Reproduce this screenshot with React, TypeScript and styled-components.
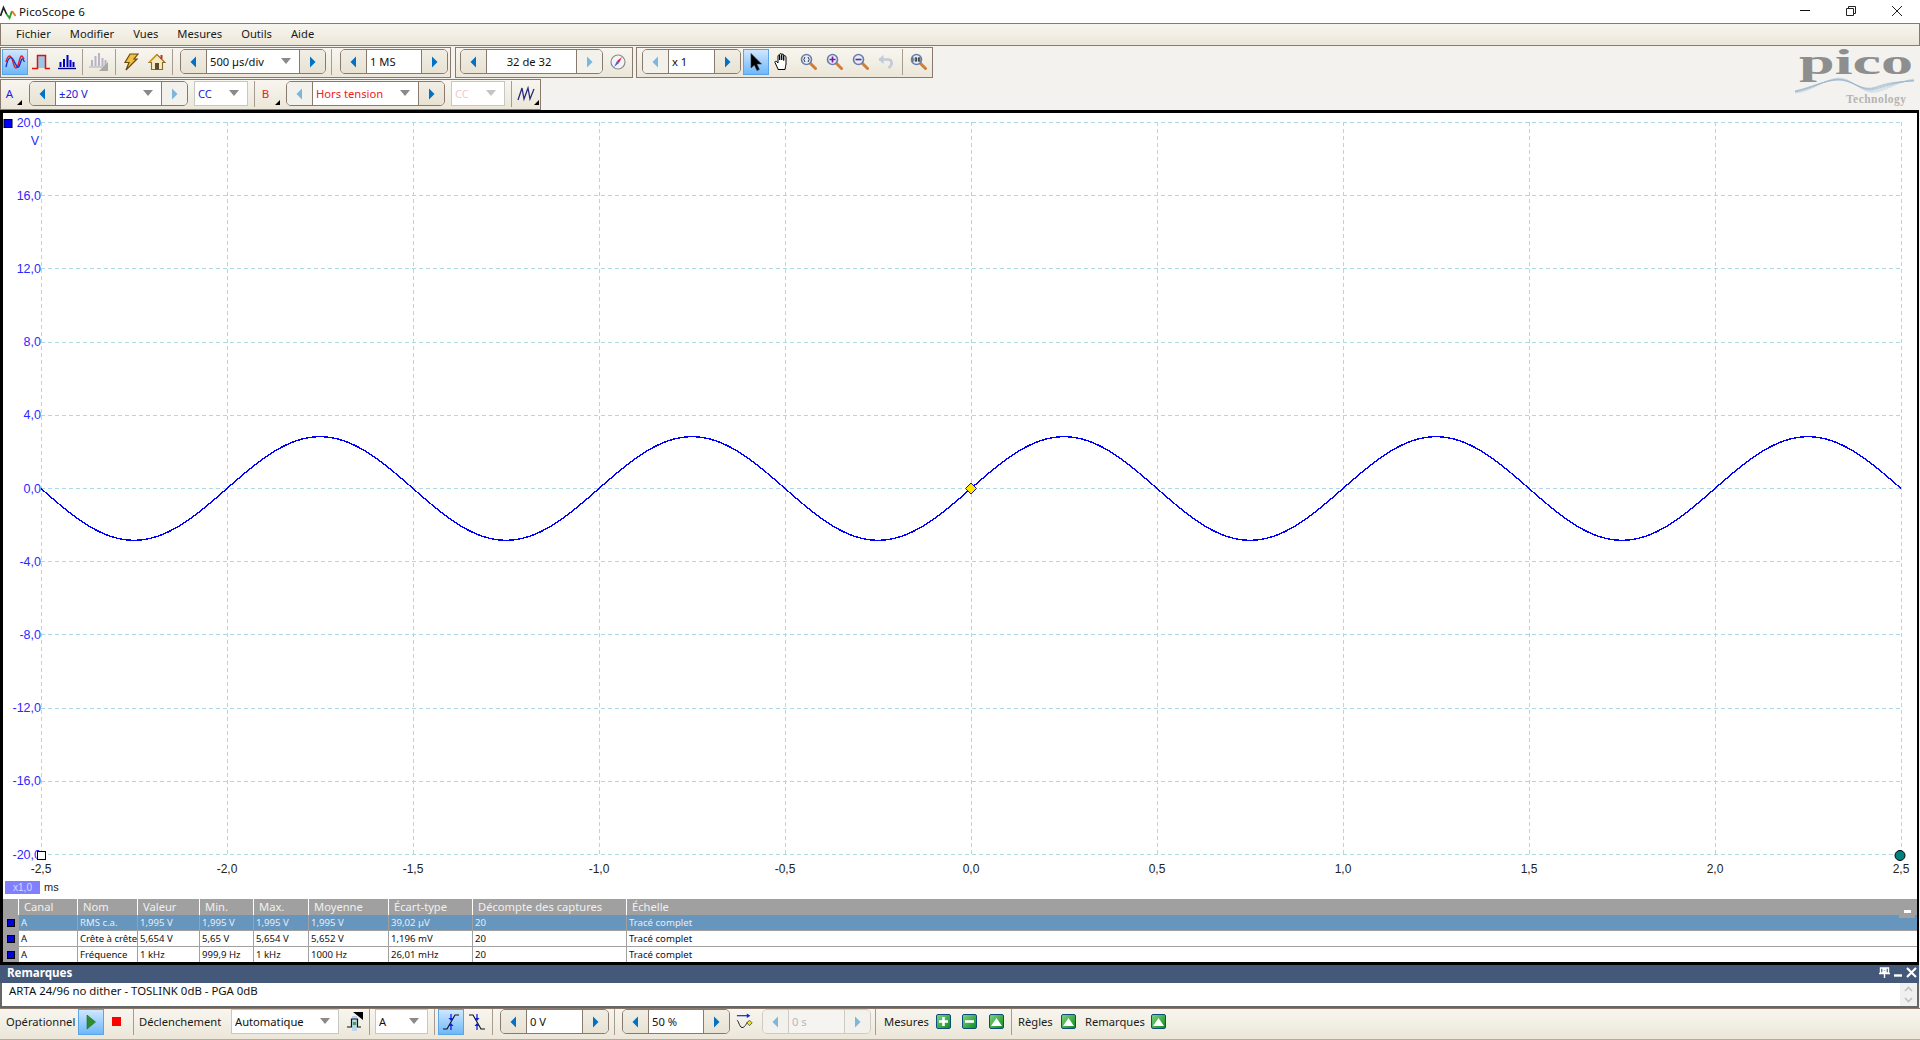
import React, { useMemo } from "react";
import styled, { createGlobalStyle } from "styled-components";

const Global = createGlobalStyle`
  html, body { margin: 0; padding: 0; background: #f4f2ee; }
  #root { width: 1920px; height: 1040px; overflow: hidden; }
  * { box-sizing: border-box; }
`;
const FONT = `"Noto Sans", "Open Sans", "Liberation Sans", sans-serif`;
const EDGE = "#8a7a6e";
const BAR = "linear-gradient(180deg, #f7f5ee 0%, #f3f0e7 40%, #ebe6d8 100%)";

const Win = styled.div`
  width: 1920px; height: 1040px; display: flex; flex-direction: column;
  font-family: ${FONT}; font-size: 11.2px; color: #111; background: #f4f2ee;
`;
const TitleBar = styled.div`
  height: 23px; background: #fff; display: flex; align-items: center;
`;
const TitleText = styled.span`
  margin-left: 3px; font-size: 11.6px; color: #111; flex: 1; letter-spacing: .1px;
`;
const WinBtn = styled.div`
  width: 46px; height: 23px; display: flex; align-items: center; justify-content: center; padding-bottom: 2px;
`;
const MenuBar = styled.div`
  height: 23px; display: flex; align-items: center; padding: 0 0 2px 15px; gap: 19px;
  background: ${BAR}; border: 1px solid ${EDGE}; font-size: 11.2px; color: #1a1a1a;
`;
const ToolArea = styled.div`
  display: flex; justify-content: space-between; height: 64px; padding-top: 1px;
`;
const ToolRows = styled.div`
  display: flex; flex-direction: column; gap: 1px;
`;
const ToolRow = styled.div`
  display: flex; height: 31px;
`;
const Group = styled.div<{ $ml?: number; $w: number }>`
  width: ${(p) => p.$w}px; margin-left: ${(p) => p.$ml ?? 0}px; height: 100%;
  display: flex; align-items: center; padding: 0 0 2px 1px;
  background: ${BAR}; border: 1px solid ${EDGE};
`;
const Item = styled.div<{ $ml?: number; $w?: number; $on?: boolean; $h?: number }>`
  flex: none; position: relative;
  width: ${(p) => p.$w ?? 26}px; height: ${(p) => p.$h ?? 26}px; margin-left: ${(p) => p.$ml ?? 0}px;
  display: flex; align-items: center; justify-content: center;
  border: 1px solid ${(p) => (p.$on ? "#5aa5e8" : "transparent")};
  background: ${(p) => (p.$on ? "linear-gradient(180deg,#cfe7ff,#6fb7f8)" : "transparent")};
`;
const Sep = styled.div<{ $ml?: number }>`
  flex: none; width: 1px; height: 26px; background: #a89c90; margin-left: ${(p) => p.$ml ?? 0}px;
`;
const Spin = styled.div<{ $ml?: number; $w: number; $off?: boolean }>`
  flex: none; width: ${(p) => p.$w}px; height: 25px; margin-left: ${(p) => p.$ml ?? 0}px;
  display: flex; border: 1px solid ${(p) => (p.$off ? "#cfcbc3" : EDGE)}; border-radius: 5px; overflow: hidden;
  background: #e9e4d7;
`;
const SpinEnd = styled.div<{ $off?: boolean }>`
  flex: none; width: 25px; display: flex; align-items: center; justify-content: center;
  background: ${(p) => (p.$off ? "#f2f1ec" : "linear-gradient(180deg,#f1eee5,#e7e2d3)")};
`;
const SpinText = styled.div<{ $center?: boolean; $color?: string; $lined?: boolean }>`
  flex: 1; background: ${(p) => (p.$lined ? "#f5f4f0" : "#fff")}; display: flex; align-items: center; overflow: hidden; white-space: nowrap;
  padding: 0 8px 1px 3px; font-size: 11.2px; color: ${(p) => p.$color ?? "#111"};
  justify-content: ${(p) => (p.$center ? "center" : "space-between")};
  border-left: 1px solid ${(p) => (p.$lined ? "#cfcbc3" : EDGE)}; border-right: 1px solid ${(p) => (p.$lined ? "#cfcbc3" : EDGE)};
`;
const Select = styled.div<{ $ml?: number; $w: number; $color?: string }>`
  flex: none; width: ${(p) => p.$w}px; height: 25px; margin-left: ${(p) => p.$ml ?? 0}px;
  background: #fff; border: 1px solid #c9c7c2; display: flex; align-items: center; justify-content: space-between;
  padding: 0 8px 1px 3px; font-size: 11.2px; color: ${(p) => p.$color ?? "#111"};
`;
const Caret = styled.span<{ $pale?: boolean }>`
  width: 0; height: 0; border-left: 5px solid transparent; border-right: 5px solid transparent;
  border-top: 6px solid ${(p) => (p.$pale ? "#c4c4c4" : "#8a8a8a")};
`;
const Corner = styled.span`
  position: absolute; right: 1px; bottom: 1px; width: 0; height: 0;
  border-left: 5px solid transparent; border-bottom: 5px solid #000;
`;
const ChanLabel = styled.span<{ $color: string }>`
  font-size: 11.5px; color: ${(p) => p.$color}; margin-right: 7px;
`;
const LogoBox = styled.div`
  width: 128px; height: 62px;
`;
const LogoSvg = styled.svg`
  display: block; overflow: visible;
`;
const ChartFrame = styled.div`
  flex: 1; min-height: 0; display: flex; flex-direction: column;
  border: solid #000; border-width: 3px 2px 3px 3px; margin-right: 1px; background: #fff;
`;
const ChartSvg = styled.svg`
  display: block; flex: 1; width: 100%; min-height: 0;
`;
const COLS = "15px 59px 60px 62px 54px 55px 80px 84px 154px 1fr";
const Head = styled.div`
  position: relative; height: 16px; display: grid; grid-template-columns: ${COLS}; background: #a0a0a0; flex: none;
`;
const HeadCell = styled.div`
  padding-left: 5px; font-size: 11.2px; line-height: 15px; color: #f0f0f0; border-left: 1px solid #fff;
  white-space: nowrap;
  &:first-child { border-left: 0; }
`;
const TabDash = styled.div`
  position: absolute; right: 2px; bottom: -3px; width: 16px; height: 8px; background: #a0a0a0; display: flex; justify-content: center;
  &::after { content: ""; width: 7px; height: 3px; background: #fff; }
`;
const Row = styled.div<{ $sel?: boolean }>`
  height: 16px; display: grid; grid-template-columns: ${COLS}; flex: none;
  background: ${(p) => (p.$sel ? "#6695bd" : "#fff")}; color: ${(p) => (p.$sel ? "#e6eef6" : "#111")};
  border-bottom: 1px solid #a0a0a0;
  &:last-child { border-bottom: 0; height: 15px; }
`;
const MarkCell = styled.div`
  background: #a0a0a0; display: flex; align-items: center; justify-content: center; padding-left: 1px;
  &::after { content: ""; width: 6px; height: 6px; background: #0000e0; border: 1px solid #000; }
`;
const Cell = styled.div`
  font-size: 9.6px; line-height: 15px; padding-left: 2px; border-left: 1px solid #a0a0a0; white-space: nowrap;
`;
const RemarkHead = styled.div`
  height: 18px; flex: none; background: #44597a; color: #fff; font-size: 11.6px; font-weight: 700;
  display: flex; align-items: center; padding: 0 0 3px 7px; justify-content: space-between; margin-right: 1px;
`;
const RemarkIcons = styled.div`
  display: flex; align-items: center; gap: 4px; padding-right: 2px;
`;
const RemarkBody = styled.div`
  height: 25px; flex: none; background: #fff; border: solid #666; border-width: 0 2px 2px 2px; margin-right: 1px;
  display: flex; justify-content: space-between; font-size: 11.4px; padding-left: 7px; line-height: 15px; color: #111;
`;
const ScrollBox = styled.div`
  width: 17px; height: 100%; background: #f0f0f0; display: flex; flex-direction: column; align-items: center; justify-content: space-around;
`;
const BottomBar = styled.div`
  height: 32px; flex: none; display: flex; align-items: center; background: ${BAR};
  border-top: 1px solid ${EDGE}; border-bottom: 1px solid #b5aa9e; padding: 0 0 5px 6px;
`;
const Label = styled.span<{ $w: number; $ml?: number }>`
  flex: none; width: ${(p) => p.$w}px; margin-left: ${(p) => p.$ml ?? 0}px; white-space: nowrap; font-size: 11.2px; color: #1a1a1a;
`;
const GreenBtn = styled.div<{ $ml: number }>`
  flex: none; width: 15px; height: 15px; margin-left: ${(p) => p.$ml}px; border: 1px solid #0b4d78; border-radius: 2px;
  background: linear-gradient(135deg,#7fd07f,#0f8f1f); display: flex; align-items: center; justify-content: center;
`;

const Arrow = ({ dir, off }: { dir: "l" | "r"; off?: boolean }) => (
  <svg width="7" height="12" viewBox="0 0 7 12">
    <path d={dir === "l" ? "M6 0.5V11.5L0.5 6Z" : "M1 0.5V11.5L6.5 6Z"} fill={off ? "#7cb6dd" : "#0071c5"} />
  </svg>
);

const Spinner = ({ w, ml, text, color, center, lOff, rOff, off, caret }: { w: number; ml?: number; text: string; color?: string; center?: boolean; lOff?: boolean; rOff?: boolean; off?: boolean; caret?: boolean }) => (
  <Spin $w={w} $ml={ml} $off={off}>
    <SpinEnd $off={lOff}><Arrow dir="l" off={lOff} /></SpinEnd>
    <SpinText $center={center} $color={color} $lined={off}>{center ? text : <span>{text}</span>}{caret && <Caret />}</SpinText>
    <SpinEnd $off={rOff}><Arrow dir="r" off={rOff} /></SpinEnd>
  </Spin>
);

const WaveIcon = () => (
  <svg width="20" height="18" viewBox="0 0 20 18" fill="none">
    <path d="M1 9C3 1 6 1 8 9S12 17 14 9 17 2 19 6" stroke="#e02020" strokeWidth="1.4" />
    <path d="M1 14C3 4 6 2 9 8S13 17 15 11 17 4 19.5 9" stroke="#2030d0" strokeWidth="1.4" />
  </svg>
);
const PulseIcon = () => (
  <svg width="20" height="18" viewBox="0 0 20 18"><rect x="7" y="2" width="8" height="13" fill="#9cc6e6" /><path d="M1 15.5H6.5V2.5H14.5V15.5H19" stroke="#e01010" strokeWidth="1.5" fill="none" /></svg>
);
const Bars = ({ c, base }: { c: string; base: string }) => (
  <svg width="18" height="16" viewBox="0 0 18 16"><path d="M2.5 13V8M6 13V5M9.5 13V1M12.5 13V6M15.5 13V8" stroke={c} strokeWidth="2" /><path d="M0 14.5H18" stroke={base} strokeWidth="1.4" /></svg>
);
const GreyBars = () => (
  <svg width="20" height="20" viewBox="0 0 20 20"><path d="M3 14V8M6.5 14V4M10 14V1M13.5 14V6M16.5 14V8" stroke="#b8b4c8" strokeWidth="2" /><path d="M0 15H18" stroke="#b8b4c8" strokeWidth="1.2" /><path d="M19 10V19H10Z" fill="#a8a8a4" /></svg>
);
const Bolt = () => (
  <svg width="16" height="18" viewBox="0 0 16 18"><path d="M7 1H15L11 6H14L3 17L6 9.5H2Z" fill="#f0c040" stroke="#6a4a10" strokeWidth="1.2" /></svg>
);
const Home = () => (
  <svg width="18" height="18" viewBox="0 0 18 18"><path d="M9 1.5L1 9.5H3.5V16.5H14.5V9.5H17Z" fill="#f4e9c0" stroke="#8a6a20" strokeWidth="1.1" /><rect x="12.5" y="2" width="2" height="4" fill="#c03020" /><rect x="7" y="10" width="4" height="6.5" fill="#5a4a30" /><path d="M9 1.5L1 9.5" stroke="#d09a20" strokeWidth="1.5" /></svg>
);
const Compass = () => (
  <svg width="16" height="16" viewBox="0 0 16 16"><circle cx="8" cy="8" r="7" fill="#f4f4f8" stroke="#8a8a90" strokeWidth="1.2" /><path d="M12 3L9 9L7 7Z" fill="#e02030" /><path d="M4 13L7 7L9 9Z" fill="#4060e0" /></svg>
);
const Cursor = () => (
  <svg width="12" height="18" viewBox="0 0 12 18"><path d="M1 0.5V15L4.4 12L7 17.5L9.3 16.4L6.8 11H11.5Z" fill="#000" stroke="#333" strokeWidth=".6" /></svg>
);
const HandIcon = () => (
  <svg width="17" height="19" viewBox="0 0 17 19" fill="#fff" stroke="#000" strokeWidth="1"><path d="M4 17L1 10.5C.6 9.4 2 8.6 2.8 9.6L4 11V4C4 2.8 5.6 2.8 5.7 4V8V2.5C5.7 1.2 7.6 1.2 7.7 2.5V8V3C7.7 1.8 9.6 1.8 9.7 3V8.5V4.5C9.8 3.3 11.6 3.3 11.7 4.5L12 5V12C12 14 11 15.5 11 17.5H4Z" /></svg>
);
const Lens = ({ mark }: { mark: "fit" | "plus" | "minus" | "100" }) => (
  <svg width="17" height="17" viewBox="0 0 17 17">
    <path d="M10 10L15.5 15.5" stroke="#d07f3a" strokeWidth="3" strokeLinecap="round" />
    <circle cx="6.5" cy="6.5" r="5" fill="#e4eefa" stroke="#6a7fa8" strokeWidth="1.6" />
    {mark === "plus" && <path d="M6.5 3.5V9.5M3.5 6.5H9.5" stroke="#7a1a9a" strokeWidth="1.6" />}
    {mark === "minus" && <path d="M3.5 6.5H9.5" stroke="#7a1a9a" strokeWidth="1.6" />}
    {mark === "fit" && <path d="M5 4L3.8 6.5L5 9M8 4L9.2 6.5L8 9" stroke="#334" strokeWidth="1" fill="none" />}
    {mark === "100" && <path d="M3 4.5V8.5M5.2 4.8H6.6V8.2H5.2ZM8.4 4.8H9.8V8.2H8.4Z" stroke="#222" strokeWidth=".9" fill="none" />}
  </svg>
);
const Undo = () => (
  <svg width="16" height="16" viewBox="0 0 16 16" fill="none"><path d="M1 5.5H10C14.5 5.5 15 11 10.5 14" stroke="#c3cad8" strokeWidth="2.6" /><path d="M5.5 .8L.5 5.5L5.5 10.2Z" fill="#c3cad8" /></svg>
);
const ChanWave = () => (
  <svg width="20" height="16" viewBox="0 0 20 16" fill="none"><path d="M1 14L5 2L7 13L11 2L13 13L17 3" stroke="#2a2a80" strokeWidth="1.3" /></svg>
);
const Play = () => (
  <svg width="10" height="16" viewBox="0 0 10 16"><path d="M1 1V15L9.5 8Z" fill="#2e8b2e" stroke="#1f6b1f" strokeWidth=".6" /></svg>
);
const TrigIcon = () => (
  <svg width="16" height="20" viewBox="0 0 16 20"><rect x="5" y="4" width="5" height="15" fill="#bcd6ee" /><path d="M0 15H4.5V7H10.5V15H14" stroke="#111" strokeWidth="1.2" fill="none" /><rect x="6" y="10" width="3" height="3" fill="#30b030" /><path d="M6 0H16V8Z" fill="#000" /></svg>
);
const Edge = ({ fall }: { fall?: boolean }) => (
  <svg width="18" height="18" viewBox="0 0 18 18" fill="none">
    <path d={fall ? "M1 2H5L13 16H17" : "M1 16H5L13 2H17"} stroke="#111" strokeWidth="1.1" />
    <path d="M9 1V7M9 11V17" stroke="#1020e0" strokeWidth="1.3" />
    <path d="M6.5 5L9 8L11.5 5ZM6.5 13L9 10L11.5 13Z" fill="#1020e0" />
  </svg>
);
const DelayIcon = () => (
  <svg width="20" height="20" viewBox="0 0 20 20" fill="none"><path d="M1 8C3 8 4 18 8 16S12 8 15 10" stroke="#222" strokeWidth="1.1" /><path d="M1 3H14" stroke="#1020e0" strokeWidth="1.3" /><path d="M12 .5L16 3L12 5.5Z" fill="#1020e0" /><path d="M15 8L18 11L15 14L12 11Z" fill="#f0e020" stroke="#333" strokeWidth=".8" /></svg>
);
const PlusG = () => <svg width="9" height="9" viewBox="0 0 9 9"><path d="M4.5 0V9M0 4.5H9" stroke="#fff" strokeWidth="2.6" /></svg>;
const MinusG = () => <svg width="9" height="9" viewBox="0 0 9 9"><path d="M0 4.5H9" stroke="#fff" strokeWidth="2.6" /></svg>;
const UpG = () => <svg width="11" height="8" viewBox="0 0 11 8"><path d="M5.5 0L11 8H0Z" fill="#fff" /></svg>;

const Logo = () => (
  <LogoSvg width="128" height="62" viewBox="0 0 128 62">
    <text x="7" y="27" fontFamily="Liberation Serif, serif" fontSize="35" fontWeight="700" fill="#8e8e8e" textLength="114" lengthAdjust="spacingAndGlyphs">pico</text>
    <g fill="none" strokeWidth=".7">
      {[0, 1, 2, 3, 4, 5].map((i) => (
        <path key={i} d={`M3 ${46 - i * 0.4}C20 ${45 - i} 32 ${32 + i * 0.3} 46 ${31 + i * 0.4}S70 ${48 - i * 0.5} 84 ${45 - i}S110 ${33 + i * 0.4} 122 ${32 + i * 0.4}`} stroke={i > 2 ? "#9eb4cc" : "#c6d8e8"} />
      ))}
    </g>
    <text x="54" y="56" fontFamily="Liberation Serif, serif" fontSize="11.5" fontWeight="700" fill="#b4b4b4" textLength="60">Technology</text>
  </LogoSvg>
);

const AppIcon = () => (
  <svg width="16" height="16" viewBox="0 0 16 16" fill="none"><path d="M0.5 12L3.5 3.5L6.5 10" stroke="#222" strokeWidth="1.7" /><path d="M6.5 10L9.5 14L12 7" stroke="#2aa02a" strokeWidth="1.9" /><path d="M12 7L15.5 12" stroke="#e08020" strokeWidth="1.9" /></svg>
);

const Y0 = 488.5, YU = 18.3, X0 = 971, XMS = 372;
const yTicks = [20, 16, 12, 8, 4, 0, -4, -8, -12, -16, -20];
const xTicks = [-2.5, -2, -1.5, -1, -0.5, 0, 0.5, 1, 1.5, 2, 2.5];
const fmt = (n: number) => n.toFixed(1).replace(".", ",");

const Chart = () => {
  const trace = useMemo(() => {
    const pts: string[] = [];
    for (let x = 41; x <= 1901; x += 1) {
      const t = (x - X0) / XMS;
      pts.push(`${x},${(Y0 - 2.83 * YU * Math.sin(2 * Math.PI * t)).toFixed(2)}`);
    }
    return pts.join(" ");
  }, []);
  return (
    <ChartSvg viewBox="3 113 1914 786" preserveAspectRatio="none">
      <g stroke="#add8e6" strokeWidth="1" strokeDasharray="4 3" shapeRendering="crispEdges">
        {yTicks.map((v) => { const y = Math.round(Y0 - v * YU - 0.5) + 0.5; return <line key={v} x1="41" x2="1901" y1={y} y2={y} />; })}
        {xTicks.map((v) => { const x = Math.round(X0 + v * XMS) + 0.5; return <line key={v} x1={x} x2={x} y1="122" y2="855" />; })}
      </g>
      <polyline points={trace} fill="none" stroke="#0000ff" strokeWidth="1.4" shapeRendering="crispEdges" />
      <g fontFamily="Liberation Sans, sans-serif" fontSize="12.5" fill="#2a2aff" textAnchor="end">
        {yTicks.map((v) => <text key={v} x="41" y={Y0 - v * YU + 4}>{fmt(v)}</text>)}
        <text x="39" y="145">V</text>
      </g>
      <g fontFamily="Liberation Sans, sans-serif" fontSize="12" fill="#222" textAnchor="middle">
        {xTicks.map((v) => <text key={v} x={X0 + v * XMS} y="873">{fmt(v)}</text>)}
      </g>
      <rect x="4" y="119.5" width="8" height="8" fill="#0000ff" stroke="#000" />
      <rect x="37.5" y="851.5" width="8" height="8" fill="#fff" stroke="#000" />
      <circle cx="1900" cy="855.5" r="5" fill="#008080" stroke="#000" />
      <path d="M971 483L976.5 488.5L971 494L965.5 488.5Z" fill="#ffe600" stroke="#1010d0" strokeWidth="1" />
      <rect x="5" y="881" width="35" height="13" fill="#8080ff" />
      <text x="22.5" y="891" fontFamily="Liberation Sans, sans-serif" fontSize="10" fill="#d8d8ff" textAnchor="middle">x1,0</text>
      <text x="44" y="891" fontFamily="Liberation Sans, sans-serif" fontSize="11" fill="#222">ms</text>
    </ChartSvg>
  );
};

const heads = ["Canal", "Nom", "Valeur", "Min.", "Max.", "Moyenne", "Écart-type", "Décompte des captures", "Échelle"];
const rows = [
  ["A", "RMS c.a.", "1,995 V", "1,995 V", "1,995 V", "1,995 V", "39,02 µV", "20", "Tracé complet"],
  ["A", "Crête à crête", "5,654 V", "5,65 V", "5,654 V", "5,652 V", "1,196 mV", "20", "Tracé complet"],
  ["A", "Fréquence", "1 kHz", "999,9 Hz", "1 kHz", "1000 Hz", "26,01 mHz", "20", "Tracé complet"],
];
const menus = ["Fichier", "Modifier", "Vues", "Mesures", "Outils", "Aide"];

export default function App() {
  return (
    <Win>
      <Global />
      <TitleBar>
        <AppIcon />
        <TitleText>PicoScope 6</TitleText>
        <WinBtn><svg width="10" height="1" viewBox="0 0 10 1"><path d="M0 .5H10" stroke="#111" /></svg></WinBtn>
        <WinBtn><svg width="10" height="10" viewBox="0 0 10 10" fill="none" stroke="#222"><path d="M.5 2.5H7.5V9.5H.5ZM2.5 2.5V.5H9.5V7.5H7.5" /></svg></WinBtn>
        <WinBtn><svg width="10" height="10" viewBox="0 0 10 10" stroke="#222"><path d="M0 0L10 10M10 0L0 10" /></svg></WinBtn>
      </TitleBar>
      <MenuBar>{menus.map((m) => <span key={m}>{m}</span>)}</MenuBar>
      <ToolArea>
        <ToolRows>
          <ToolRow>
            <Group $w={451}>
              <Item $on><WaveIcon /></Item>
              <Item><PulseIcon /></Item>
              <Item><Bars c="#0000c8" base="#000080" /></Item>
              <Sep $ml={2} />
              <Item $ml={3}><GreyBars /></Item>
              <Sep $ml={3} />
              <Item $ml={2}><Bolt /></Item>
              <Item><Home /></Item>
              <Sep $ml={2} />
              <Spinner w={146} ml={7} text="500 µs/div" caret />
              <Sep $ml={5} />
              <Spinner w={108} ml={8} text="1 MS" />
            </Group>
            <Group $w={178} $ml={4}>
              <Spinner w={143} ml={3} text="32 de 32" center rOff />
              <Item $ml={2}><Compass /></Item>
            </Group>
            <Group $w={297} $ml={3}>
              <Spinner w={99} ml={4} text="x 1" lOff />
              <Item $ml={2} $on><Cursor /></Item>
              <Item><HandIcon /></Item>
              <Item><Lens mark="fit" /></Item>
              <Item><Lens mark="plus" /></Item>
              <Item><Lens mark="minus" /></Item>
              <Item><Undo /></Item>
              <Sep $ml={3} />
              <Item $ml={2}><Lens mark="100" /></Item>
            </Group>
          </ToolRow>
          <ToolRow>
            <Group $w={541}>
              <Item $w={22}><ChanLabel $color="#2020ff">A</ChanLabel><Corner /></Item>
              <Spinner w={159} ml={5} text="±20 V" color="#2020e0" caret rOff />
              <Select $w={54} $ml={6} $color="#2020e0">CC<Caret /></Select>
              <Sep $ml={6} />
              <Item $ml={1}><ChanLabel $color="#f02020">B</ChanLabel><Corner /></Item>
              <Spinner w={159} ml={4} text="Hors tension" color="#f02020" caret lOff />
              <Select $w={54} $ml={6} $color="#f6c8c8">CC<Caret $pale /></Select>
              <Sep $ml={6} />
              <Item $w={29}><ChanWave /><Corner /></Item>
            </Group>
          </ToolRow>
        </ToolRows>
        <LogoBox><Logo /></LogoBox>
      </ToolArea>
      <ChartFrame>
        <Chart />
        <Head>
          <HeadCell />
          {heads.map((h) => <HeadCell key={h}>{h}</HeadCell>)}
          <TabDash />
        </Head>
        {rows.map((r, i) => (
          <Row key={r[1]} $sel={i === 0}>
            <MarkCell />
            {r.map((c, j) => <Cell key={j}>{c}</Cell>)}
          </Row>
        ))}
      </ChartFrame>
      <RemarkHead>
        Remarques
        <RemarkIcons>
          <svg width="11" height="11" viewBox="0 0 11 11"><path d="M1.5 1H9.5V6H1.5ZM4 2.5H7V4.5H4ZM0 6.5H11M5.5 7V11" stroke="#fff" strokeWidth="1.4" fill="none" /></svg>
          <svg width="8" height="9" viewBox="0 0 8 9"><path d="M0 7.5H8" stroke="#fff" strokeWidth="2.4" /></svg>
          <svg width="11" height="11" viewBox="0 0 11 11"><path d="M1 1L10 10M10 1L1 10" stroke="#fff" strokeWidth="2.2" /></svg>
        </RemarkIcons>
      </RemarkHead>
      <RemarkBody>
        ARTA 24/96 no dither - TOSLINK 0dB - PGA 0dB
        <ScrollBox>
          <svg width="9" height="6" viewBox="0 0 9 6"><path d="M1 5L4.5 1.5L8 5" stroke="#c0c0c0" strokeWidth="1.6" fill="none" /></svg>
          <svg width="9" height="6" viewBox="0 0 9 6"><path d="M1 1L4.5 4.5L8 1" stroke="#c0c0c0" strokeWidth="1.6" fill="none" /></svg>
        </ScrollBox>
      </RemarkBody>
      <BottomBar>
        <Label $w={69}>Opérationnel</Label>
        <Item $ml={3} $on><Play /></Item>
        <Item $ml={7} $w={11} $h={11}><svg width="11" height="11" viewBox="0 0 11 11"><rect width="11" height="11" fill="#ff0000" /></svg></Item>
        <Sep $ml={11} />
        <Label $w={81} $ml={5}>Déclenchement</Label>
        <Select $w={108} $ml={11}>Automatique<Caret /></Select>
        <Item $ml={6} $w={20}><TrigIcon /></Item>
        <Sep $ml={4} />
        <Select $w={53} $ml={5}>A<Caret /></Select>
        <Sep $ml={6} />
        <Item $ml={3} $on><Edge /></Item>
        <Item><Edge fall /></Item>
        <Sep $ml={2} />
        <Spinner w={109} ml={7} text="0 V" />
        <Sep $ml={5} />
        <Spinner w={108} ml={7} text="50 %" />
        <Item $ml={5} $w={20}><DelayIcon /></Item>
        <Spinner w={109} ml={7} text="0 s" color="#b8b8b8" lOff rOff off />
        <Sep $ml={4} />
        <Label $w={43} $ml={8}>Mesures</Label>
        <GreenBtn $ml={9}><PlusG /></GreenBtn>
        <GreenBtn $ml={11}><MinusG /></GreenBtn>
        <GreenBtn $ml={12}><UpG /></GreenBtn>
        <Sep $ml={7} />
        <Label $w={34} $ml={6}>Règles</Label>
        <GreenBtn $ml={9}><UpG /></GreenBtn>
        <Label $w={59} $ml={9}>Remarques</Label>
        <GreenBtn $ml={7}><UpG /></GreenBtn>
      </BottomBar>
    </Win>
  );
}
